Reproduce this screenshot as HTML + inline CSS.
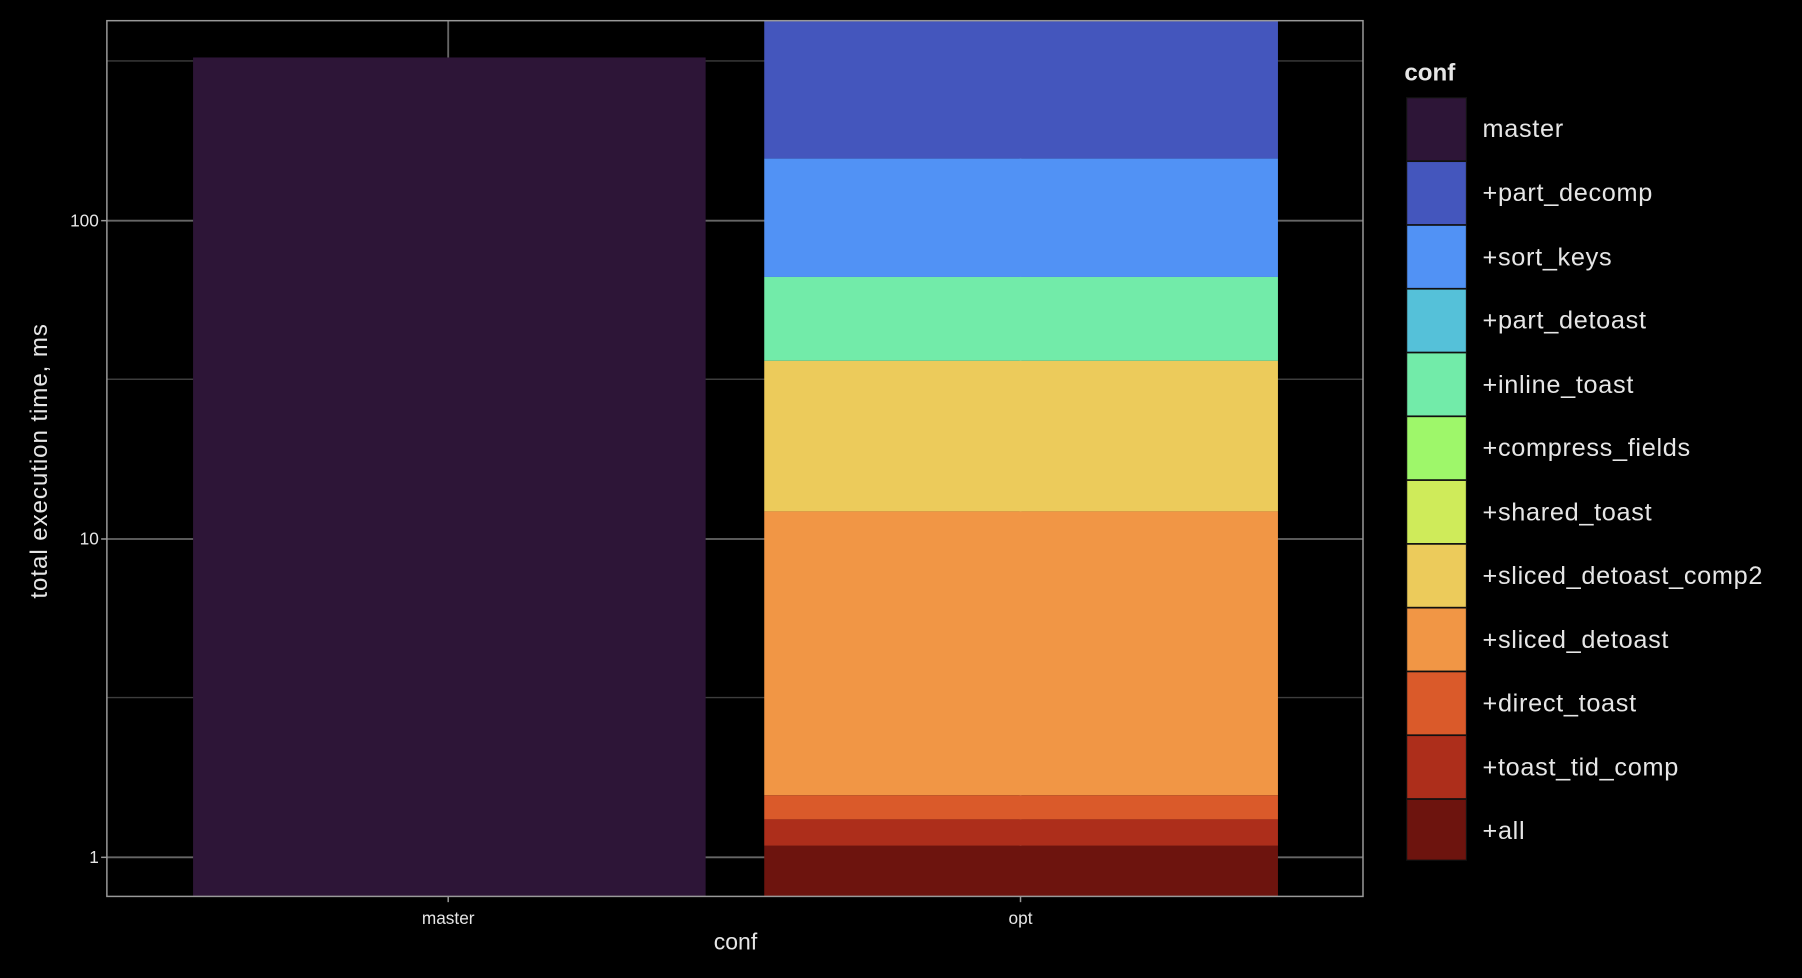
<!DOCTYPE html>
<html><head><meta charset="utf-8"><style>
html,body{margin:0;padding:0;background:#000;width:1802px;height:978px;overflow:hidden}
svg{display:block}
text{font-family:"Liberation Sans",sans-serif;fill:#e6e6e6}
</style></head><body>
<svg width="1802" height="978" viewBox="0 0 1568 851" preserveAspectRatio="none">
<rect width="1568" height="851" fill="#000"/>
<g stroke="#3d3d3d" stroke-width="1.2">
<line x1="93" y1="53" x2="1186" y2="53"/>
<line x1="93" y1="330" x2="1186" y2="330"/>
<line x1="93" y1="607" x2="1186" y2="607"/>
</g>
<g stroke="#666" stroke-width="1.6">
<line x1="93" y1="192" x2="1186" y2="192"/>
<line x1="93" y1="469" x2="1186" y2="469"/>
<line x1="93" y1="746" x2="1186" y2="746"/>
<line x1="390" y1="18" x2="390" y2="780"/>
<line x1="888" y1="18" x2="888" y2="780"/>
</g>
<rect x="168" y="50" width="446" height="730" fill="#2d1537"/>
<rect x="665" y="18" width="447" height="120" fill="#4456bd"/>
<rect x="665" y="138" width="447" height="103" fill="#5192f5"/>
<rect x="665" y="241" width="447" height="73" fill="#72eba9"/>
<rect x="665" y="314" width="447" height="131" fill="#eccb5b"/>
<rect x="665" y="445" width="447" height="247" fill="#f19645"/>
<rect x="665" y="692" width="447" height="21" fill="#da5a2a"/>
<rect x="665" y="713" width="447" height="23" fill="#ad2e1b"/>
<rect x="665" y="736" width="447" height="44" fill="#6d140e"/>
<rect x="93" y="18" width="1093" height="762" fill="none" stroke="#999" stroke-width="1.3"/>
<g stroke="#999" stroke-width="1.3">
<line x1="88" y1="192" x2="93" y2="192"/>
<line x1="88" y1="469" x2="93" y2="469"/>
<line x1="88" y1="746" x2="93" y2="746"/>
<line x1="390" y1="780" x2="390" y2="785"/>
<line x1="888" y1="780" x2="888" y2="785"/>
</g>
<g font-size="15" text-anchor="end">
<text x="86" y="197">100</text>
<text x="86" y="474">10</text>
<text x="86" y="751">1</text>
</g>
<g font-size="15" text-anchor="middle">
<text x="390" y="804">master</text>
<text x="888" y="804">opt</text>
</g>
<text x="640" y="826" font-size="20" text-anchor="middle">conf</text>
<text transform="translate(41,401) rotate(-90)" font-size="21" letter-spacing="0.8" text-anchor="middle">total execution time, ms</text>
<text x="1222" y="70" font-size="21" font-weight="bold" fill="#fff">conf</text>
<g stroke="#111" stroke-width="1">
<rect x="1224" y="85" width="52" height="55" fill="#2d1537"/>
<rect x="1224" y="140.5" width="52" height="55" fill="#4456bd"/>
<rect x="1224" y="196" width="52" height="55" fill="#5192f5"/>
<rect x="1224" y="251.5" width="52" height="55" fill="#55c1d9"/>
<rect x="1224" y="307" width="52" height="55" fill="#72eba9"/>
<rect x="1224" y="362.5" width="52" height="55" fill="#9ef76a"/>
<rect x="1224" y="418" width="52" height="55" fill="#cfeb5a"/>
<rect x="1224" y="473.5" width="52" height="55" fill="#eccb5b"/>
<rect x="1224" y="529" width="52" height="55" fill="#f19645"/>
<rect x="1224" y="584.5" width="52" height="55" fill="#da5a2a"/>
<rect x="1224" y="640" width="52" height="55" fill="#ad2e1b"/>
<rect x="1224" y="695.5" width="52" height="53" fill="#6d140e"/>
</g>
<g font-size="22" letter-spacing="0.6">
<text x="1290" y="119">master</text>
<text x="1290" y="175">+part_decomp</text>
<text x="1290" y="231">+sort_keys</text>
<text x="1290" y="286">+part_detoast</text>
<text x="1290" y="342">+inline_toast</text>
<text x="1290" y="397">+compress_fields</text>
<text x="1290" y="453">+shared_toast</text>
<text x="1290" y="508">+sliced_detoast_comp2</text>
<text x="1290" y="564">+sliced_detoast</text>
<text x="1290" y="619">+direct_toast</text>
<text x="1290" y="675">+toast_tid_comp</text>
<text x="1290" y="730">+all</text>
</g>
</svg>
</body></html>
